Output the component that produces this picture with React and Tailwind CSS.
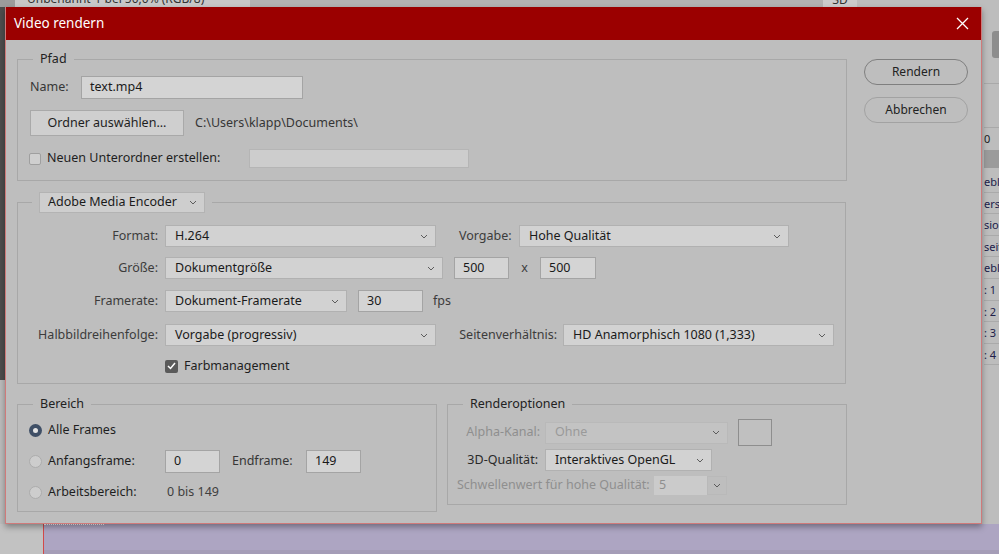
import React from 'react'

const Chevron = () => (
  <svg width="8" height="5" viewBox="0 0 8 5" className="shrink-0">
    <path d="M1 1l3 3 3-3" fill="none" stroke="#5c5c5c" strokeWidth="1" />
  </svg>
)

function Select({ value, w, h = 'h-[22px]', disabled = false }) {
  return (
    <div
      className={`${w} ${h} flex items-center justify-between pl-[9px] pr-[7px] border ${
        disabled ? 'bg-[#c3c3c3] border-[#b9b9b9] text-[#9a9a9a]' : 'bg-[#d2d2d2] border-[#b1b1b1] text-[#1a1a1a]'
      }`}
    >
      <span>{value}</span>
      <Chevron />
    </div>
  )
}

function Input({ value = '', w, h = 'h-[22px]' }) {
  return (
    <div className={`${w} ${h} flex items-center pl-[8px] bg-[#d4d4d4] border border-[#a4a4a4] text-[#1a1a1a]`}>
      {value}
    </div>
  )
}

function Radio({ checked }) {
  return checked ? (
    <div className="w-[13px] h-[13px] rounded-full bg-[#3f4f66] flex items-center justify-center shrink-0">
      <div className="w-[5px] h-[5px] rounded-full bg-[#e4e4e4]" />
    </div>
  ) : (
    <div className="w-[13px] h-[13px] rounded-full bg-[#cdcdcd] border border-[#acacac] shrink-0" />
  )
}

export default function App() {
  return (
    <div className="relative w-[999px] h-[554px] overflow-hidden bg-[#b8b8b8] font-['Noto_Sans',sans-serif] text-[12.5px] text-[#2a2a2a]">
      {/* Photoshop behind the dialog */}
      <div className="flex flex-col h-full">
        <div className="h-[7px] flex overflow-hidden">
          <div className="w-[15px] bg-[#9c9c9c]" />
          <div className="w-[235px] bg-[#c8c8c8] pl-[12px] overflow-hidden">
            <div className="-mt-[10px] text-[12px] text-[#333] whitespace-nowrap">Unbenannt-1 bei 50,0% (RGB/8) *</div>
          </div>
          <div className="w-[573px] bg-[#b3b3b3]" />
          <div className="w-[34px] bg-[#cccccc] overflow-hidden text-center">
            <div className="-mt-[9px] text-[12px] text-[#333]">3D</div>
          </div>
          <div className="flex-1 bg-[#bdbdbd]" />
        </div>
        <div className="flex-1 flex">
          <div className="w-[5px] flex flex-col">
            <div className="h-[373px] bg-[#4d4d4d]" />
            <div className="flex-1 bg-[#bcbcbc]" />
          </div>
          <div className="flex-1" />
          <div className="w-[17px] flex flex-col bg-[#bdbdbd] text-[11px] text-[#222] pl-[2px]">
            <div className="h-[24px]" />
            <div className="h-[27px] ml-[8px] bg-[#8d8d8d] rounded-l-[3px]" />
            <div className="h-[26px] border-b border-[#a9a9a9]" />
            <div className="h-[44px] border-b border-[#a9a9a9]" />
            <div className="h-[22px] leading-[22px]">0</div>
            <div className="h-[18px] bg-[#9b9b9b]" />
            <div className="h-[3px]" />
            {['ebla', 'erse', 'sion', 'seite', 'ebla', ': 1', ': 2', ': 3', ': 4'].map((t, i) => (
              <div key={i} className="h-[21.6px] leading-[21px] border-b border-[#aaaaaa] whitespace-nowrap overflow-hidden text-[#20204a]">
                {t}
              </div>
            ))}
            <div className="flex-1" />
          </div>
        </div>
        <div className="h-[30px] flex">
          <div className="w-[43px] bg-[#c2c2c2]" />
          <div className="w-px bg-[#d24a4a]" />
          <div className="flex-1 flex flex-col bg-[#ada5c2]">
            <div className="h-[3px] flex">
              <div className="w-[60px] border-t border-dotted border-white" />
            </div>
            <div className="flex-1" />
            <div className="h-[4px] bg-[#a59db7]" />
          </div>
        </div>
      </div>

      {/* Dialog */}
      <div className="absolute left-[5px] top-[7px] w-[977px] h-[517px] flex flex-col bg-[#bebebe] border-x border-b border-[#cf7a7a] shadow-[0_3px_6px_rgba(0,0,0,0.35)]">
        <div className="h-[33px] bg-[#9b0000] flex items-center justify-between pl-[8px] pr-[12px] text-white">
          <span className="text-[13.5px]">Video rendern</span>
          <svg width="13" height="13" viewBox="0 0 13 13">
            <path d="M1 1l11 11M12 1L1 12" stroke="#ffffff" strokeWidth="1.3" fill="none" />
          </svg>
        </div>

        <div className="flex pl-[11px] pt-[11px]">
          <div className="w-[830px] flex flex-col">
            {/* Pfad */}
            <fieldset className="border border-[#a8a8a8] pb-[12px] pl-[12px]">
              <legend className="ml-[3px] px-[7px] leading-[16px] text-[#222]">Pfad</legend>
              <div className="flex items-center h-[23px] mt-[9px]">
                <span className="w-[51px] text-[#363636]">Name:</span>
                <Input value="text.mp4" w="w-[222px]" h="h-[23px]" />
              </div>
              <div className="flex items-center h-[26px] mt-[11px]">
                <div className="w-[154px] h-[26px] flex items-center justify-center bg-[#cfcfcf] border border-[#a9a9a9] text-[#1e1e1e]">
                  Ordner auswählen...
                </div>
                <span className="ml-[11px] text-[#363636]">C:\Users\klapp\Documents\</span>
              </div>
              <div className="flex items-center h-[19px] mt-[13px] -ml-[1px]">
                <div className="w-[12px] h-[12px] bg-[#cfcfcf] border border-[#9f9f9f] rounded-[2px]" />
                <span className="ml-[6px] w-[202px] text-[#1e1e1e]">Neuen Unterordner erstellen:</span>
                <div className="w-[220px] h-[19px] bg-[#cdcdcd] border border-[#b5b5b5]" />
              </div>
            </fieldset>

            {/* Encoder */}
            <fieldset className="mt-[11px] w-[829px] border border-[#a8a8a8] pb-[9px]">
              <legend className="ml-[14px] px-[7px]">
                <div className="w-[166px] h-[21px] flex items-center justify-between pl-[8px] pr-[7px] bg-[#cecece] border border-[#b3b3b3] text-[#1a1a1a]">
                  <span>Adobe Media Encoder</span>
                  <Chevron />
                </div>
              </legend>
              <div className="flex items-center h-[22px] mt-[12px]">
                <span className="w-[140px] text-right text-[#3c3c3c]">Format:</span>
                <div className="ml-[7px]"><Select value="H.264" w="w-[271px]" /></div>
                <span className="ml-[23px] w-[60px] text-[#3c3c3c]">Vorgabe:</span>
                <Select value="Hohe Qualität" w="w-[270px]" />
              </div>
              <div className="flex items-center h-[22px] mt-[10px]">
                <span className="w-[140px] text-right text-[#3c3c3c]">Größe:</span>
                <div className="ml-[7px]"><Select value="Dokumentgröße" w="w-[278px]" /></div>
                <div className="ml-[11px]"><Input value="500" w="w-[55px]" /></div>
                <span className="w-[31px] text-center text-[#3c3c3c]">x</span>
                <Input value="500" w="w-[56px]" />
              </div>
              <div className="flex items-center h-[22px] mt-[11px]">
                <span className="w-[140px] text-right text-[#3c3c3c]">Framerate:</span>
                <div className="ml-[7px]"><Select value="Dokument-Framerate" w="w-[182px]" /></div>
                <div className="ml-[11px]"><Input value="30" w="w-[65px]" /></div>
                <span className="ml-[10px] text-[#3c3c3c]">fps</span>
              </div>
              <div className="flex items-center h-[22px] mt-[12px]">
                <span className="w-[140px] text-right text-[#3c3c3c]">Halbbildreihenfolge:</span>
                <div className="ml-[7px]"><Select value="Vorgabe (progressiv)" w="w-[271px]" /></div>
                <span className="w-[121px] text-right text-[#3c3c3c]">Seitenverhältnis:</span>
                <div className="ml-[6px]"><Select value="HD Anamorphisch 1080 (1,333)" w="w-[271px]" /></div>
              </div>
              <div className="flex items-center h-[16px] mt-[12px] pl-[147px]">
                <div className="w-[13px] h-[13px] bg-[#5a5a5a] rounded-[2px] flex items-center justify-center">
                  <svg width="9" height="8" viewBox="0 0 9 8">
                    <path d="M1 4l2.5 2.5L8 1" fill="none" stroke="#ffffff" strokeWidth="1.5" />
                  </svg>
                </div>
                <span className="ml-[6px] text-[#1e1e1e]">Farbmanagement</span>
              </div>
            </fieldset>

            <div className="flex items-start mt-[12px]">
              {/* Bereich */}
              <fieldset className="w-[420px] border border-[#a8a8a8] pb-[11px] pl-[11px]">
                <legend className="ml-[4px] px-[7px] leading-[16px] text-[#222]">Bereich</legend>
                <div className="flex items-center h-[16px] mt-[10px]">
                  <Radio checked />
                  <span className="ml-[6px] text-[#1e1e1e]">Alle Frames</span>
                </div>
                <div className="flex items-center h-[23px] mt-[12px]">
                  <Radio />
                  <span className="ml-[6px] w-[117px] text-[#1e1e1e]">Anfangsframe:</span>
                  <Input value="0" w="w-[55px]" h="h-[23px]" />
                  <span className="ml-[12px] w-[74px] text-[#363636]">Endframe:</span>
                  <Input value="149" w="w-[55px]" h="h-[23px]" />
                </div>
                <div className="flex items-center h-[16px] mt-[11px]">
                  <Radio />
                  <span className="ml-[6px] w-[119px] text-[#1e1e1e]">Arbeitsbereich:</span>
                  <span className="text-[#404040]">0 bis 149</span>
                </div>
              </fieldset>

              {/* Renderoptionen */}
              <fieldset className="ml-[10px] w-[400px] border border-[#a8a8a8] pb-[9px]">
                <legend className="ml-[15px] px-[7px] leading-[16px] text-[#222]">Renderoptionen</legend>
                <div className="flex items-center h-[27px] mt-[7px]">
                  <span className="w-[92px] text-right text-[#8f8f8f]">Alpha-Kanal:</span>
                  <div className="ml-[5px]"><Select value="Ohne" w="w-[183px]" disabled /></div>
                  <div className="ml-[10px] w-[34px] h-[27px] border border-[#8e8e8e] bg-[#c0c0c0]" />
                </div>
                <div className="flex items-center h-[22px] mt-[3px]">
                  <span className="w-[90px] text-right text-[#2a2a2a]">3D-Qualität:</span>
                  <div className="ml-[7px]"><Select value="Interaktives OpenGL" w="w-[167px]" h="h-[22px]" /></div>
                </div>
                <div className="flex items-center h-[19px] mt-[5px] pl-[9px]">
                  <span className="w-[197px] whitespace-nowrap text-[#8f8f8f]">Schwellenwert für hohe Qualität:</span>
                  <div className="w-[53px] h-[19px] pl-[5px] flex items-center bg-[#cbcbcb] text-[#8f8f8f]">5</div>
                  <div className="w-[20px] h-[19px] flex items-center justify-center border border-[#b9b9b9]">
                    <Chevron />
                  </div>
                </div>
              </fieldset>
            </div>
          </div>

          {/* Buttons */}
          <div className="ml-[17px] pt-[8px] flex flex-col gap-[12px] text-[12px] text-[#222]">
            <div className="w-[104px] h-[26px] rounded-full border border-[#7f7f7f] flex items-center justify-center">Rendern</div>
            <div className="w-[104px] h-[26px] rounded-full border border-[#a2a2a2] flex items-center justify-center">Abbrechen</div>
          </div>
        </div>
      </div>
    </div>
  )
}
